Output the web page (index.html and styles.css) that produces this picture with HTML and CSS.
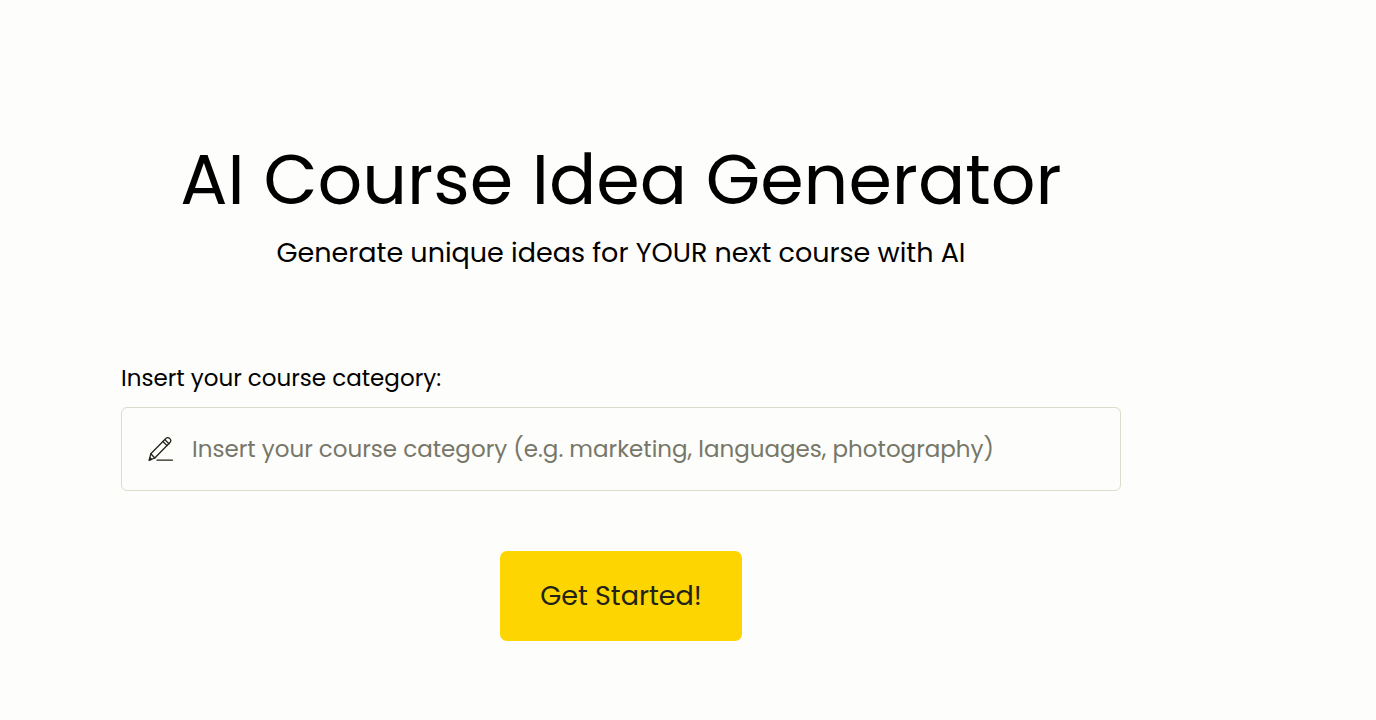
FILE: index.html
```html
<!DOCTYPE html>
<html lang="en">
<head>
<meta charset="utf-8">
<meta name="viewport" content="width=device-width, initial-scale=1">
<title>AI Course Idea Generator</title>
<link rel="stylesheet" href="styles.css">
</head>
<body>
<main class="generator">
  <header class="intro">
    <h1 class="title">AI Course Idea Generator</h1>
    <p class="subtitle">Generate unique ideas for YOUR next course with AI</p>
  </header>
  <form class="form">
    <label class="label" for="category">Insert your course category:</label>
    <div class="field">
      <svg class="icon" viewBox="0 0 26 26" fill="none" stroke="currentColor" stroke-width="1.3" stroke-linejoin="round" stroke-linecap="round" aria-hidden="true">
        <path d="M1.2 24.2 2.8 17.8 17.6 2.8C18.8 1.6 20.6 1.5 21.8 2.6C23 3.8 22.9 5.6 21.7 6.8L6.8 22Z"/>
        <path d="M2.8 17.8 6.8 22M15 5.5 19 9.6M16.9 3.6 20.9 7.7M1.2 24.2 3.6 23.3 2 21.8Z"/>
        <path d="M9 24.2H24.4"/>
      </svg>
      <input class="input" id="category" type="text" placeholder="Insert your course category (e.g. marketing, languages, photography)">
    </div>
    <button class="button" type="button">Get Started!</button>
  </form>
</main>
</body>
</html>
```
FILE: styles.css
```css
* {
  box-sizing: border-box;
}

body {
  margin: 0;
  background: #fdfdfb;
  color: #000;
  font-family: Poppins, Inter, "Open Sans", sans-serif;
}

.generator {
  padding: 132px 255px 64px 121px;
}

.intro {
  text-align: center;
}

.title {
  margin: 0;
  font-size: 70px;
  font-weight: 400;
  line-height: 96px;
}

.subtitle {
  margin: 5px 0 0;
  font-size: 27px;
  line-height: 40px;
}

.form {
  display: flex;
  flex-direction: column;
  margin-top: 89px;
}

.label {
  font-size: 23px;
  line-height: 32px;
}

.field {
  display: flex;
  align-items: center;
  gap: 18px;
  margin-top: 13px;
  padding: 0 26px;
  border: 1px solid #dcdccb;
  border-radius: 6px;
}

.icon {
  flex: none;
  width: 26px;
  height: 26px;
  color: #24241a;
}

.input {
  flex: 1;
  min-width: 0;
  height: 82px;
  padding: 0;
  border: 0;
  outline: 0;
  background: transparent;
  color: #222;
  font-family: inherit;
  font-size: 23px;
}

.input::placeholder {
  color: #777768;
  opacity: 1;
}

.button {
  align-self: center;
  margin-top: 60px;
  padding: 25px 40px;
  border: 0;
  border-radius: 7px;
  background: #fdd501;
  color: #222218;
  font-family: inherit;
  font-size: 27px;
  line-height: 40px;
}
```
